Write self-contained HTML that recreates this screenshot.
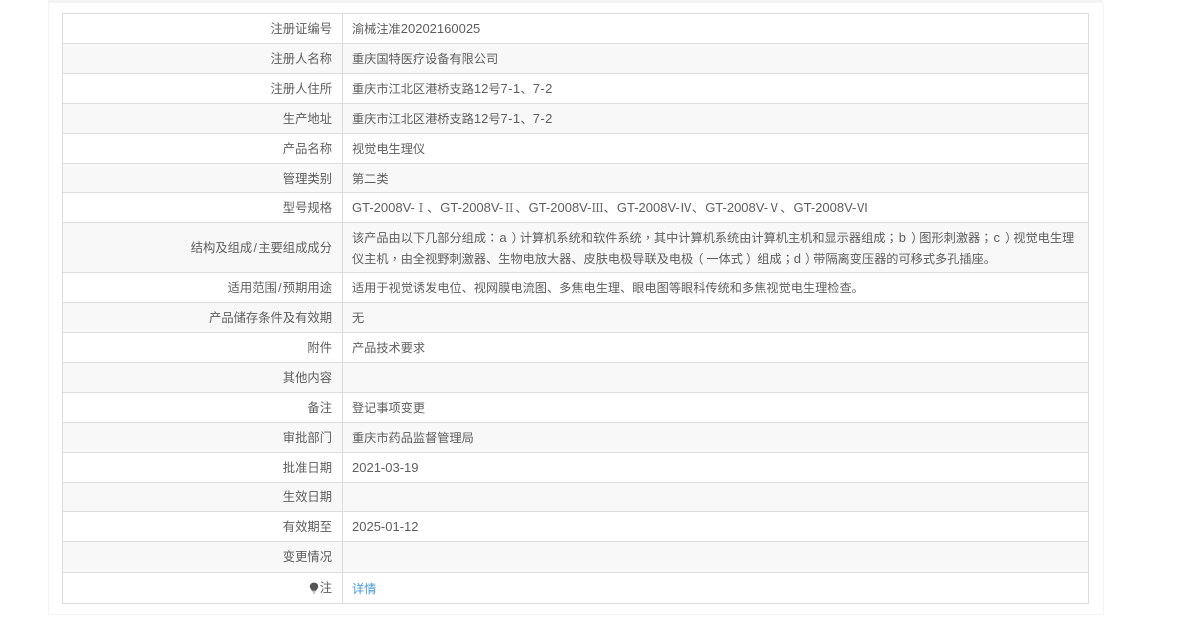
<!DOCTYPE html>
<html><head><meta charset="utf-8"><title>视觉电生理仪</title>
<style>
html,body{margin:0;padding:0;background:#fff}
body{width:1200px;height:634px;position:relative;overflow:hidden;font:12.2px/20px "Liberation Sans","Noto Sans CJK SC",sans-serif;color:#5e5e5e}
#band{position:absolute;left:48px;top:0;width:1055px;height:3px;background:#f4f4f4}
#box{position:absolute;left:48px;top:3px;width:1054px;height:611px;border:1px solid #f5f5f5;border-top:0}
#t{position:absolute;left:62px;top:13px;width:1027px;height:591px;box-sizing:border-box;border:1px solid #ddd;filter:blur(.35px)}
.r{position:absolute;left:0;width:1025px;border-bottom:1px solid #ddd;box-sizing:border-box}
.r.e{background:#f8f8f8}
.l{position:absolute;left:0;top:0;bottom:0;width:279px;border-right:1px solid #ddd;display:flex;align-items:center;justify-content:flex-end;font-size:12.3px}
.l>span{margin-right:10px;white-space:nowrap}
.v{position:absolute;left:289px;top:0;bottom:0;width:730px;display:flex;align-items:center;white-space:nowrap}
.v a{color:#4a9bd8;text-decoration:none}
.n{font-size:13px}
.w{font-size:13px;letter-spacing:.4px}
.k{font-size:13px;margin:0 1.1px}
.c{font-family:"Noto Sans CJK TC",sans-serif}
.s{display:inline-block;width:6px;text-align:center}
.g{display:inline-block;width:88.3px;white-space:nowrap}
.rn{display:inline-block;width:12.2px;text-align:center}
.sf{font-family:"Noto Serif CJK SC",serif}
.pr{position:relative;left:4px}
.pl{position:relative;left:-2px;margin-right:1px}
.px{position:relative;left:3px;margin-right:2px}
.d{padding-top:1px}
</style></head><body>
<div id="band"></div><div id="box"></div>
<div id="t">
<div class="r" style="top:0;height:30px"><div class="l"><span>注册证编号</span></div><div class="v">渝械注准<span class="n">20202160025</span></div></div>
<div class="r e" style="top:30px;height:30px"><div class="l"><span>注册人名称</span></div><div class="v">重庆国特医疗设备有限公司</div></div>
<div class="r" style="top:60px;height:30px"><div class="l"><span>注册人住所</span></div><div class="v"><span>重庆市江北区港桥支路<span class="n">12</span>号<span class="w">7-1</span>、<span class="w">7-2</span></span></div></div>
<div class="r e" style="top:90px;height:30px"><div class="l"><span>生产地址</span></div><div class="v"><span>重庆市江北区港桥支路<span class="n">12</span>号<span class="w">7-1</span>、<span class="w">7-2</span></span></div></div>
<div class="r" style="top:120px;height:30px"><div class="l"><span>产品名称</span></div><div class="v">视觉电生理仪</div></div>
<div class="r e" style="top:150px;height:29px"><div class="l d"><span>管理类别</span></div><div class="v d">第二类</div></div>
<div class="r" style="top:179px;height:30px"><div class="l d"><span>型号规格</span></div><div class="v d"><span><span class="g"><span class="n">GT-2008V-</span><span class="rn sf">Ⅰ</span>、</span><span class="g"><span class="n">GT-2008V-</span><span class="rn sf">Ⅱ</span>、</span><span class="g"><span class="n">GT-2008V-</span><span class="rn sf">Ⅲ</span>、</span><span class="g"><span class="n">GT-2008V-</span><span class="rn">Ⅳ</span>、</span><span class="g"><span class="n">GT-2008V-</span><span class="rn">Ⅴ</span>、</span><span class="g"><span class="n">GT-2008V-</span><span class="rn">Ⅵ</span></span></span></div></div>
<div class="r e" style="top:209px;height:50px"><div class="l"><span>结构及组成<span class="s">/</span>主要组成成分</span></div><div class="v"><div>该产品由以下几部分组成<span class="c" lang="zh-Hant">：</span><span class="k">a</span><span class="pr">）</span>计算机系统和软件系统<span class="c" lang="zh-Hant">，</span>其中计算机系统由计算机主机和显示器组成<span class="c" lang="zh-Hant">；</span><span class="k">b</span><span class="pr">）</span>图形刺激器<span class="c" lang="zh-Hant">；</span><span class="k">c</span><span class="pr">）</span>视觉电生理<br>仪主机<span class="c" lang="zh-Hant">，</span>由全视野刺激器、生物电放大器、皮肤电极导联及电极<span class="pl">（</span>一体式<span class="px">）</span>组成<span class="c" lang="zh-Hant">；</span><span class="n">d</span><span class="pr">）</span>带隔离变压器的可移式多孔插座。</div></div></div>
<div class="r" style="top:259px;height:30px"><div class="l"><span>适用范围<span class="s">/</span>预期用途</span></div><div class="v">适用于视觉诱发电位、视网膜电流图、多焦电生理、眼电图等眼科传统和多焦视觉电生理检查。</div></div>
<div class="r e" style="top:289px;height:30px"><div class="l"><span>产品储存条件及有效期</span></div><div class="v">无</div></div>
<div class="r" style="top:319px;height:30px"><div class="l"><span>附件</span></div><div class="v">产品技术要求</div></div>
<div class="r e" style="top:349px;height:30px"><div class="l"><span>其他内容</span></div><div class="v"></div></div>
<div class="r" style="top:379px;height:30px"><div class="l"><span>备注</span></div><div class="v">登记事项变更</div></div>
<div class="r e" style="top:409px;height:30px"><div class="l"><span>审批部门</span></div><div class="v">重庆市药品监督管理局</div></div>
<div class="r" style="top:439px;height:30px"><div class="l"><span>批准日期</span></div><div class="v"><span class="n">2021-03-19</span></div></div>
<div class="r e" style="top:469px;height:29px"><div class="l"><span>生效日期</span></div><div class="v"></div></div>
<div class="r" style="top:498px;height:30px"><div class="l"><span>有效期至</span></div><div class="v"><span class="n">2025-01-12</span></div></div>
<div class="r e" style="top:528px;height:31px"><div class="l"><span>变更情况</span></div><div class="v"></div></div>
<div class="r" style="top:559px;height:30px;border-bottom:0"><div class="l"><span style="display:flex;align-items:center"><svg width="10" height="12" viewBox="0 0 10 12" style="margin-right:1px"><path d="M5 0.600C2.500 .6 .8 2.300.8 4.400c0 1.800 1.300 2.700 2.100 4.400h4.200c.8-1.700 2.100-2.600 2.100-4.400C9.200 2.300 7.500.6 5 .6z" fill="#555"/><path d="M3.400 9.500h3.200v.6H3.400zM3.900 10.800h2.200v.6H3.900z" fill="#777"/></svg>注</span></div><div class="v d"><a>详情</a></div></div>
</div>
</body></html>
